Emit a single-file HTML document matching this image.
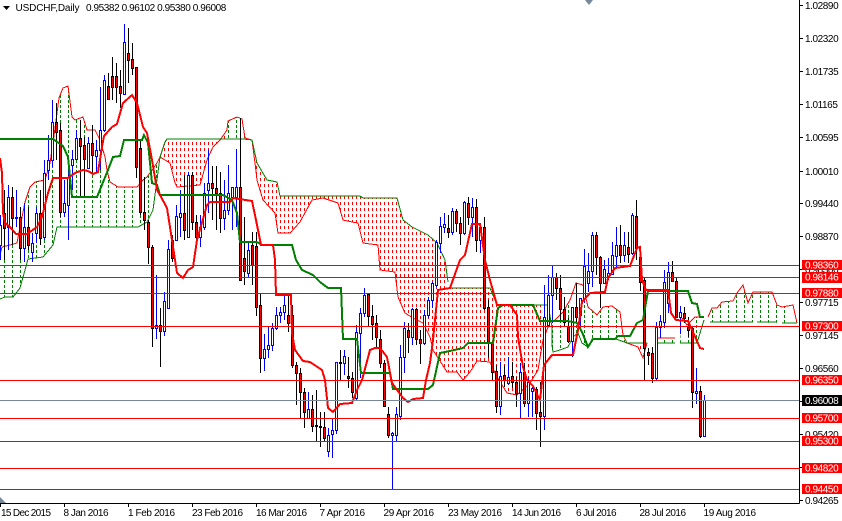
<!DOCTYPE html>
<html><head><meta charset="utf-8"><style>
html,body{margin:0;padding:0;background:#fff;width:842px;height:521px;overflow:hidden}
svg{display:block}
text{font-family:"Liberation Sans",sans-serif;font-size:10px;letter-spacing:-.42px;fill:#000}
text.d{letter-spacing:0}
text.w{fill:#fff}
.l{fill:none;stroke-width:2;shape-rendering:crispEdges}
.t{fill:none;stroke-width:1;shape-rendering:crispEdges}
.c{shape-rendering:crispEdges}
</style></head><body>
<svg width="842" height="521" viewBox="0 0 842 521" xmlns="http://www.w3.org/2000/svg">
<defs>
<clipPath id="cp"><rect x="0" y="0" width="799" height="503"/></clipPath>
<clipPath id="cg"><path d="M0 255L2 247 10 245 17 243 25 202 30 187 35 182 45 180 50 163 53 143 59 98 63 88 68 86 72 117 75 120 83 117 87 130 95 130 100 140 105 157 107 170 110 182 118 187 137 187 143 180 147 177 157 163 160 157 153 210 147 222 138 227 57 227 53 245 43 257 28 259 25 270 20 288 13 297 5 297 0 299Z"/>
<path d="M227 130L228 121 237 117 242 119 245 138 252 140 227 139Z"/>
<path d="M550 322L555 320 563 312 570 300 576 283 583 285 588 307 597 315 603 307 612 306 620 312 623 335 627 343 616 339 592 339 588 347 582 343 578 333 573 337 568 347 560 350 553 352 552 345Z"/>
<path d="M657 338H675V343H657Z"/>
<path d="M682 318L687 325 695 317 704 317 704 320 697 343 680 343Z"/>
<path d="M708 317L712 308 717 308 722 302 733 301 737 293 743 285 748 303 753 292 772 292 777 305 782 307 793 305 797 323 710 322Z"/></clipPath>
<clipPath id="cr"><path d="M160 157L165 142 167 139 227 139 227 130 220 140 213 147 207 160 200 185 177 187 175 183 170 163Z"/>
<path d="M252 140L257 163 267 180 277 182 280 196 360 196 363 198 397 198 403 220 412 227 418 230 428 235 437 243 445 260 448 288 490 288 497 305 548 305 550 322 543 340 538 370 530 383 517 395 507 393 497 377 490 362 477 361 470 372 463 380 457 372 447 372 433 350 430 337 423 323 413 318 405 313 398 297 395 272 380 270 378 245 363 243 358 223 352 222 343 220 338 203 323 198 312 200 300 222 290 233 278 233 275 213 263 200 257 180 255 163Z"/>
<path d="M627 343L647 343 643 358 638 347Z"/></clipPath>
</defs>
<g clip-path="url(#cp)">
<!-- cloud hatch -->
<g clip-path="url(#cg)"><path class="c" fill="none" stroke="#008000" stroke-dasharray="3 2" d="M4.5 80v220m8-220v220m8-220v220m8-220v220m8-220v220m8-220v220m8-220v220m8-220v220m8-220v220m8-220v220m8-220v220m8-220v220m8-220v220m8-220v220m8-220v220m8-220v220m8-220v220m8-220v220m8-220v220m8-220v220m8-220v220m8-220v220m8-220v220m8-220v220m8-220v220m8-220v220m8-220v220m8-220v220m8-220v220m8-220v220m8-220v220m8-220v220M552.5 280v80m8-80v80m8-80v80m8-80v80m8-80v80m8-80v80m8-80v80m8-80v80m8-80v80m8-80v80m8-80v80m8-80v80m8-80v80m8-80v80m8-80v80m8-80v80m8-80v80m8-80v80m8-80v80m8-80v80m8-80v80m8-80v80m8-80v80m8-80v80m8-80v80m8-80v80m8-80v80m8-80v80m8-80v80m8-80v80"/></g>
<g clip-path="url(#cr)"><path class="c" fill="none" stroke="#f00" stroke-dasharray="3 3" d="M160.5 130v100m4-100v100m4-100v100m4-100v100m4-100v100m4-100v100m4-100v100m4-100v100m4-100v100m4-100v100m4-100v100m4-100v100m4-100v100m4-100v100m4-100v100m4-100v100m4-100v100m4-100v100M252.5 130v270m4-270v270m4-270v270m4-270v270m4-270v270m4-270v270m4-270v270m4-270v270m4-270v270m4-270v270m4-270v270m4-270v270m4-270v270m4-270v270m4-270v270m4-270v270m4-270v270m4-270v270m4-270v270m4-270v270m4-270v270m4-270v270m4-270v270m4-270v270m4-270v270m4-270v270m4-270v270m4-270v270m4-270v270m4-270v270m4-270v270m4-270v270m4-270v270m4-270v270m4-270v270m4-270v270m4-270v270m4-270v270m4-270v270m4-270v270m4-270v270m4-270v270m4-270v270m4-270v270m4-270v270m4-270v270m4-270v270m4-270v270m4-270v270m4-270v270m4-270v270m4-270v270m4-270v270m4-270v270m4-270v270m4-270v270m4-270v270m4-270v270m4-270v270m4-270v270m4-270v270m4-270v270m4-270v270m4-270v270m4-270v270m4-270v270m4-270v270m4-270v270m4-270v270m4-270v270m4-270v270m4-270v270m4-270v270m4-270v270m4-270v270m4-270v270M628.5 340v20m4-20v20m4-20v20m4-20v20m4-20v20"/></g>
<!-- span lines -->
<path class="t" stroke="#f00" d="M0 255L2 247 10 245 17 243 25 202 30 187 35 182 45 180 50 163 53 143 59 98 63 88 68 86 72 117 75 120 83 117 87 130 95 130 100 140 105 157 107 170 110 182 118 187 137 187 143 180 147 177 157 163 160 157 170 163 175 183 177 187 200 185 207 160 213 147 220 140 227 130 228 121 237 117 242 119 245 138 252 140 255 163 257 180 263 200 275 213 278 233 290 233 300 222 312 200 323 198 338 203 343 220 352 222 358 223 363 243 378 245 380 270 395 272 398 297 405 313 413 318 423 323 430 337 433 350 447 372 457 372 463 380 470 372 477 361 490 362 497 377 507 393 517 395 530 383 538 370 543 340 550 322 555 320 563 312 570 300 576 283 583 285 588 307 597 315 603 307 612 306 620 312 623 335 627 343 638 347 643 358 647 343M657 338H675M682 318L687 325 695 317 704 317M708 317L712 308 717 308 722 302 733 301 737 293 743 285 748 303 753 292 772 292 777 305 782 307 793 305 797 323"/>
<path class="t" stroke="#008000" d="M0 299L5 297 13 297 20 288 25 270 28 259 43 257 53 245 57 227 138 227 147 222 153 210 160 157 165 142 167 139 243 139 252 140 257 163 267 180 277 182 280 196 360 196 363 198 397 198 403 220 412 227 418 230 428 235 437 243 445 260 448 282M448 288H490L497 305H548L552 327 552 345 553 352 560 350 568 347 573 337 578 333 582 343 588 347 592 339 616 339 627 343H647M657 343H675M680 343H697L704 320M710 322H753M757 322H777M782 323H797"/>
<!-- candles -->
<path class="c" fill="none" stroke="#00f" d="M0.5 215V260M8.5 185V250M16.5 190V227M24.5 203V262M32.5 233V262M36.5 207V243M44.5 160V240M48.5 135V180M52.5 100V167M64.5 180V217M68.5 163V240M72.5 150V190M76.5 130V160M88.5 137V168M96.5 140V173M100.5 87V170M104.5 75V132M124.5 24V95M156.5 275V339M164.5 292V336M168.5 240V308M176.5 205V240M180.5 190V237M188.5 172V237M200.5 215V247M204.5 183V230M208.5 150V213M224.5 180V230M228.5 165V215M232.5 187V230M236.5 149V227M248.5 243V277M264.5 334V371M268.5 327V358M272.5 323V351M276.5 307V330M280.5 307V323M284.5 295V320M308.5 392V418M328.5 428V457M332.5 418V458M336.5 362V434M344.5 350V375M356.5 325V400M360.5 308V378M364.5 288V317M392.5 432V490M396.5 407V442M400.5 345V420M404.5 322V373M412.5 308V345M424.5 310V345M428.5 297V318M432.5 282V308M436.5 240V287M440.5 217V253M444.5 213V233M452.5 208V235M464.5 201V235M472.5 198V237M480.5 227V253M500.5 362V415M508.5 357V385M520.5 363V418M528.5 377V417M532.5 387V417M544.5 285V430M548.5 275V327M552.5 266V323M572.5 307V357M580.5 298V330M584.5 249V303M588.5 253V292M592.5 232V287M604.5 260V283M608.5 258V280M612.5 242V275M616.5 227V267M624.5 232V262M632.5 213V255M656.5 322V380M660.5 315V338M664.5 270V328M668.5 262V313M680.5 306V334M696.5 368V404M704.5 395V437"/>
<path class="c" fill="none" stroke="#000" d="M4.5 190V260M12.5 187V245M20.5 207V260M28.5 207V250M40.5 190V245M56.5 103V160M60.5 123V217M80.5 120V197M84.5 137V197M92.5 125V173M108.5 73V100M112.5 57V100M116.5 63V103M120.5 70V108M128.5 28V83M132.5 43V75M136.5 67V178M140.5 140V215M144.5 177V230M148.5 220V264M152.5 245V347M160.5 308V367M172.5 235V262M184.5 175V240M192.5 172V230M196.5 215V248M212.5 166V220M216.5 166V230M220.5 172V233M240.5 118V281M244.5 217V285M252.5 232V285M256.5 232V316M260.5 294V373M288.5 295V332M292.5 305V368M296.5 362V405M300.5 368V418M304.5 388V428M312.5 395V432M316.5 390V442M320.5 412V447M324.5 412V442M340.5 350V380M348.5 357V388M352.5 372V398M368.5 293V327M372.5 305V340M376.5 315V347M380.5 330V368M384.5 360V407M388.5 407V438M408.5 323V353M416.5 308V345M420.5 330V364M448.5 215V238M456.5 209V232M460.5 217V245M468.5 197V225M476.5 199V252M484.5 217V310M488.5 300V358M492.5 343V380M496.5 365V413M504.5 365V387M512.5 362V388M516.5 377V407M524.5 363V407M536.5 387V430M540.5 382V447M556.5 273V300M560.5 275V320M564.5 297V327M568.5 318V343M576.5 283V323M596.5 232V275M600.5 256V308M620.5 225V263M628.5 232V263M636.5 200V260M640.5 248V291M644.5 278V380M648.5 348V365M652.5 347V383M672.5 261V282M676.5 277V317M684.5 307V323M688.5 317V337M692.5 327V408M700.5 386V438"/>
<path class="c" fill="#fff" stroke="#00f" d="M-.5 225.5h2V245.5h-2zM7.5 197.5h2V227.5h-2zM15.5 217.5h2V218.5h-2zM23.5 227.5h2V248.5h-2zM31.5 243.5h2V252.5h-2zM35.5 213.5h2V233.5h-2zM43.5 173.5h2V237.5h-2zM47.5 160.5h2V170.5h-2zM51.5 122.5h2V160.5h-2zM63.5 203.5h2V212.5h-2zM67.5 177.5h2V205.5h-2zM71.5 159.5h2V165.5h-2zM75.5 138.5h2V159.5h-2zM87.5 143.5h2V168.5h-2zM95.5 150.5h2V156.5h-2zM99.5 130.5h2V150.5h-2zM103.5 80.5h2V130.5h-2zM123.5 42.5h2V94.5h-2zM155.5 325.5h2V328.5h-2zM163.5 301.5h2V331.5h-2zM167.5 249.5h2V308.5h-2zM175.5 216.5h2V240.5h-2zM179.5 213.5h2V217.5h-2zM187.5 175.5h2V237.5h-2zM199.5 227.5h2V237.5h-2zM203.5 193.5h2V227.5h-2zM207.5 183.5h2V190.5h-2zM223.5 210.5h2V218.5h-2zM227.5 193.5h2V210.5h-2zM231.5 187.5h2V197.5h-2zM235.5 187.5h2V197.5h-2zM247.5 250.5h2V273.5h-2zM263.5 349.5h2V358.5h-2zM267.5 345.5h2V349.5h-2zM271.5 328.5h2V345.5h-2zM275.5 315.5h2V328.5h-2zM279.5 312.5h2V315.5h-2zM283.5 305.5h2V312.5h-2zM307.5 409.5h2V418.5h-2zM327.5 435.5h2V451.5h-2zM331.5 430.5h2V434.5h-2zM335.5 362.5h2V430.5h-2zM343.5 356.5h2V363.5h-2zM355.5 332.5h2V398.5h-2zM359.5 313.5h2V333.5h-2zM363.5 295.5h2V313.5h-2zM391.5 433.5h2V435.5h-2zM395.5 414.5h2V435.5h-2zM399.5 357.5h2V416.5h-2zM403.5 328.5h2V357.5h-2zM411.5 309.5h2V337.5h-2zM423.5 315.5h2V343.5h-2zM427.5 300.5h2V315.5h-2zM431.5 283.5h2V300.5h-2zM435.5 242.5h2V285.5h-2zM439.5 226.5h2V243.5h-2zM443.5 224.5h2V227.5h-2zM451.5 211.5h2V232.5h-2zM463.5 202.5h2V233.5h-2zM471.5 207.5h2V217.5h-2zM479.5 227.5h2V240.5h-2zM499.5 376.5h2V406.5h-2zM507.5 377.5h2V383.5h-2zM519.5 372.5h2V393.5h-2zM527.5 382.5h2V403.5h-2zM531.5 388.5h2V391.5h-2zM543.5 317.5h2V416.5h-2zM547.5 295.5h2V325.5h-2zM551.5 277.5h2V295.5h-2zM571.5 307.5h2V341.5h-2zM579.5 298.5h2V315.5h-2zM583.5 266.5h2V298.5h-2zM587.5 271.5h2V283.5h-2zM591.5 235.5h2V271.5h-2zM603.5 269.5h2V283.5h-2zM607.5 273.5h2V277.5h-2zM611.5 255.5h2V274.5h-2zM615.5 245.5h2V256.5h-2zM623.5 245.5h2V255.5h-2zM631.5 215.5h2V253.5h-2zM655.5 327.5h2V378.5h-2zM659.5 321.5h2V327.5h-2zM663.5 282.5h2V322.5h-2zM667.5 272.5h2V303.5h-2zM679.5 312.5h2V317.5h-2zM695.5 391.5h2V393.5h-2zM703.5 400.5h2V436.5h-2z"/>
<path class="c" fill="#f00" stroke="#000" d="M3.5 213.5h2V228.5h-2zM11.5 197.5h2V218.5h-2zM19.5 217.5h2V248.5h-2zM27.5 227.5h2V245.5h-2zM39.5 213.5h2V238.5h-2zM55.5 122.5h2V132.5h-2zM59.5 130.5h2V212.5h-2zM79.5 138.5h2V146.5h-2zM83.5 145.5h2V159.5h-2zM91.5 143.5h2V155.5h-2zM107.5 86.5h2V99.5h-2zM111.5 76.5h2V87.5h-2zM115.5 76.5h2V87.5h-2zM119.5 86.5h2V93.5h-2zM127.5 53.5h2V60.5h-2zM131.5 59.5h2V68.5h-2zM135.5 67.5h2V167.5h-2zM139.5 148.5h2V212.5h-2zM143.5 212.5h2V220.5h-2zM147.5 222.5h2V247.5h-2zM151.5 247.5h2V328.5h-2zM159.5 325.5h2V331.5h-2zM171.5 240.5h2V258.5h-2zM183.5 213.5h2V230.5h-2zM191.5 175.5h2V222.5h-2zM195.5 222.5h2V237.5h-2zM211.5 183.5h2V188.5h-2zM215.5 188.5h2V193.5h-2zM219.5 193.5h2V218.5h-2zM239.5 187.5h2V280.5h-2zM243.5 258.5h2V271.5h-2zM251.5 245.5h2V265.5h-2zM255.5 246.5h2V307.5h-2zM259.5 305.5h2V358.5h-2zM287.5 315.5h2V323.5h-2zM291.5 315.5h2V365.5h-2zM295.5 365.5h2V373.5h-2zM299.5 373.5h2V392.5h-2zM303.5 392.5h2V412.5h-2zM311.5 409.5h2V426.5h-2zM315.5 425.5h2V426.5h-2zM319.5 426.5h2V427.5h-2zM323.5 427.5h2V438.5h-2zM339.5 362.5h2V363.5h-2zM347.5 376.5h2V378.5h-2zM351.5 378.5h2V392.5h-2zM367.5 294.5h2V316.5h-2zM371.5 316.5h2V324.5h-2zM375.5 323.5h2V337.5h-2zM379.5 339.5h2V363.5h-2zM383.5 363.5h2V406.5h-2zM387.5 414.5h2V435.5h-2zM407.5 330.5h2V337.5h-2zM415.5 309.5h2V339.5h-2zM419.5 339.5h2V343.5h-2zM447.5 228.5h2V232.5h-2zM455.5 211.5h2V223.5h-2zM459.5 223.5h2V233.5h-2zM467.5 203.5h2V217.5h-2zM475.5 207.5h2V240.5h-2zM483.5 227.5h2V308.5h-2zM487.5 307.5h2V343.5h-2zM491.5 343.5h2V372.5h-2zM495.5 371.5h2V406.5h-2zM503.5 375.5h2V380.5h-2zM511.5 376.5h2V382.5h-2zM515.5 382.5h2V393.5h-2zM523.5 372.5h2V403.5h-2zM535.5 389.5h2V413.5h-2zM539.5 412.5h2V416.5h-2zM555.5 277.5h2V288.5h-2zM559.5 288.5h2V309.5h-2zM563.5 309.5h2V322.5h-2zM567.5 327.5h2V341.5h-2zM575.5 307.5h2V317.5h-2zM595.5 235.5h2V257.5h-2zM599.5 257.5h2V283.5h-2zM619.5 245.5h2V255.5h-2zM627.5 247.5h2V254.5h-2zM635.5 216.5h2V248.5h-2zM639.5 257.5h2V282.5h-2zM643.5 280.5h2V348.5h-2zM647.5 352.5h2V355.5h-2zM651.5 353.5h2V378.5h-2zM671.5 272.5h2V281.5h-2zM675.5 281.5h2V317.5h-2zM683.5 313.5h2V318.5h-2zM687.5 327.5h2V330.5h-2zM691.5 328.5h2V392.5h-2zM699.5 391.5h2V436.5h-2z"/>
<!-- kijun -->
<path class="l" stroke="#008000" d="M0 139H53L63 146 68 157 72 197H97L108 170 113 157 120 156 124 140H142L144 135 148 143 152 183 157 185 160 195H223L232 200 237 213 240 242H257L262 245H292L296 260 302 270 313 275 320 282 328 288H341L343 339H357L361 373H390L393 389H428L433 385 440 353 450 351 463 348 468 343H493L498 308 503 305H533L540 321H568L577 323 582 332 588 347 593 339H615L618 336H630L637 323 643 320 648 291H688L692 303 697 304 700 317H704"/>
<!-- tenkan -->
<path class="l" stroke="#f00" d="M0 158L2 173 3 213 5 223 10 227 16 234H27L37 227 42 217 48 193 53 178H68L75 173 83 170 88 171 93 174 98 172 102 147 104 136 112 127 117 124 123 103 132 95 137 103 143 127 147 133 152 160 157 190 160 195 167 208 172 240 175 260 177 273 183 278 188 270 193 267 197 240 207 205 210 202H230L233 198 252 201 256 220 261 245H273L275 260 276 295H291L292 333 295 350 303 361 310 362 322 370 325 380 328 408 333 412 340 404 352 403 357 390 362 380 370 350 375 348H380L387 357 392 383 403 398 408 402 413 399 423 398 426 380 430 363 433 340 438 290 450 288 460 260 465 255 472 224H480L485 260 490 280 497 305H510L517 315 518 337 523 367 527 380 533 386 540 400 544 365 552 355H573L578 330 582 302 590 293 605 292 608 278 615 268 630 266 637 248 640 247 642 280 646 290H668L671 313 676 320 688 321 693 332 700 348 704 349"/>
<!-- horizontal lines -->
<path class="c" fill="none" stroke="#f00" d="M0 265.5H799M0 277.5H799M0 293.5H799M0 326.5H799M0 380.5H799M0 418.5H799M0 441.5H799M0 468.5H799M0 489.5H799"/>
<path class="c" fill="none" stroke="#778899" d="M0 400.5H799"/>
</g>
<!-- markers -->
<path fill="#778899" d="M0 497L6 503H0Z"/>
<path fill="#778899" d="M585 0H593L589 5Z"/>
<path fill="#000" d="M3 6H10L6.5 10Z"/>
<!-- axes -->
<path class="c" fill="none" stroke="#000" d="M0 503.5H799.5M799.5 0V503.5M0.5 503V507M64.5 503V507M128.5 503V507M192.5 503V507M256.5 503V507M320.5 503V507M384.5 503V507M448.5 503V507M512.5 503V507M576.5 503V507M640.5 503V507M704.5 503V507M799 5.5H803M799 38.5H803M799 71.5H803M799 104.5H803M799 137.5H803M799 171.5H803M799 203.5H803M799 236.5H803M799 269.5H803M799 302.5H803M799 335.5H803M799 368.5H803M799 401.5H803M799 434.5H803M799 467.5H803M799 500.5H803"/>
<!-- header -->
<text class="d" x="15.5" y="11" textLength="64">USDCHF,Daily</text>
<text x="86" y="11">0.95382 0.96102 0.95380 0.96008</text>
<!-- price scale -->
<text x="805" y="9">1.02890</text>
<text x="805" y="42">1.02320</text>
<text x="805" y="75">1.01735</text>
<text x="805" y="108">1.01165</text>
<text x="805" y="141">1.00595</text>
<text x="805" y="175">1.00010</text>
<text x="805" y="207">0.99440</text>
<text x="805" y="240">0.98870</text>
<text x="805" y="273">0.98300</text>
<text x="805" y="306">0.97715</text>
<text x="805" y="339">0.97145</text>
<text x="805" y="372">0.96560</text>
<text x="805" y="438">0.95420</text>
<text x="805" y="504">0.94265</text>
<!-- price tags -->
<g class="c" fill="#f00">
<rect x="802" y="260" width="40" height="10"/>
<rect x="802" y="272" width="40" height="11"/>
<rect x="802" y="288" width="40" height="10"/>
<rect x="802" y="321" width="40" height="10"/>
<rect x="802" y="375" width="40" height="10"/>
<rect x="802" y="413" width="40" height="10"/>
<rect x="802" y="436" width="40" height="10"/>
<rect x="802" y="463" width="40" height="10"/>
<rect x="802" y="484" width="40" height="10"/>
<rect x="802" y="395" width="40" height="11" fill="#000"/>
</g>
<text class="w" x="805" y="268.5">0.98360</text>
<text class="w" x="805" y="280.5">0.98146</text>
<text class="w" x="805" y="296.5">0.97880</text>
<text class="w" x="805" y="329.5">0.97300</text>
<text class="w" x="805" y="383.5">0.96350</text>
<text class="w" x="805" y="404">0.96008</text>
<text class="w" x="805" y="421.5">0.95700</text>
<text class="w" x="805" y="444.5">0.95300</text>
<text class="w" x="805" y="471.5">0.94820</text>
<text class="w" x="805" y="492.5">0.94450</text>
<!-- dates -->
<text class="d" x="1" y="516" textLength="50">15 Dec 2015</text>
<text class="d" x="63.5" y="516" textLength="45">8 Jan 2016</text>
<text class="d" x="128" y="516" textLength="47">1 Feb 2016</text>
<text class="d" x="192" y="516" textLength="51">23 Feb 2016</text>
<text class="d" x="256" y="516" textLength="51">16 Mar 2016</text>
<text class="d" x="319.5" y="516" textLength="45.5">7 Apr 2016</text>
<text class="d" x="383.5" y="516" textLength="50.5">29 Apr 2016</text>
<text class="d" x="448" y="516" textLength="54">23 May 2016</text>
<text class="d" x="512" y="516" textLength="49">14 Jun 2016</text>
<text class="d" x="576" y="516" textLength="40.5">6 Jul 2016</text>
<text class="d" x="639.5" y="516" textLength="46.5">28 Jul 2016</text>
<text class="d" x="703.5" y="516" textLength="52.5">19 Aug 2016</text>
</svg>
</body></html>
